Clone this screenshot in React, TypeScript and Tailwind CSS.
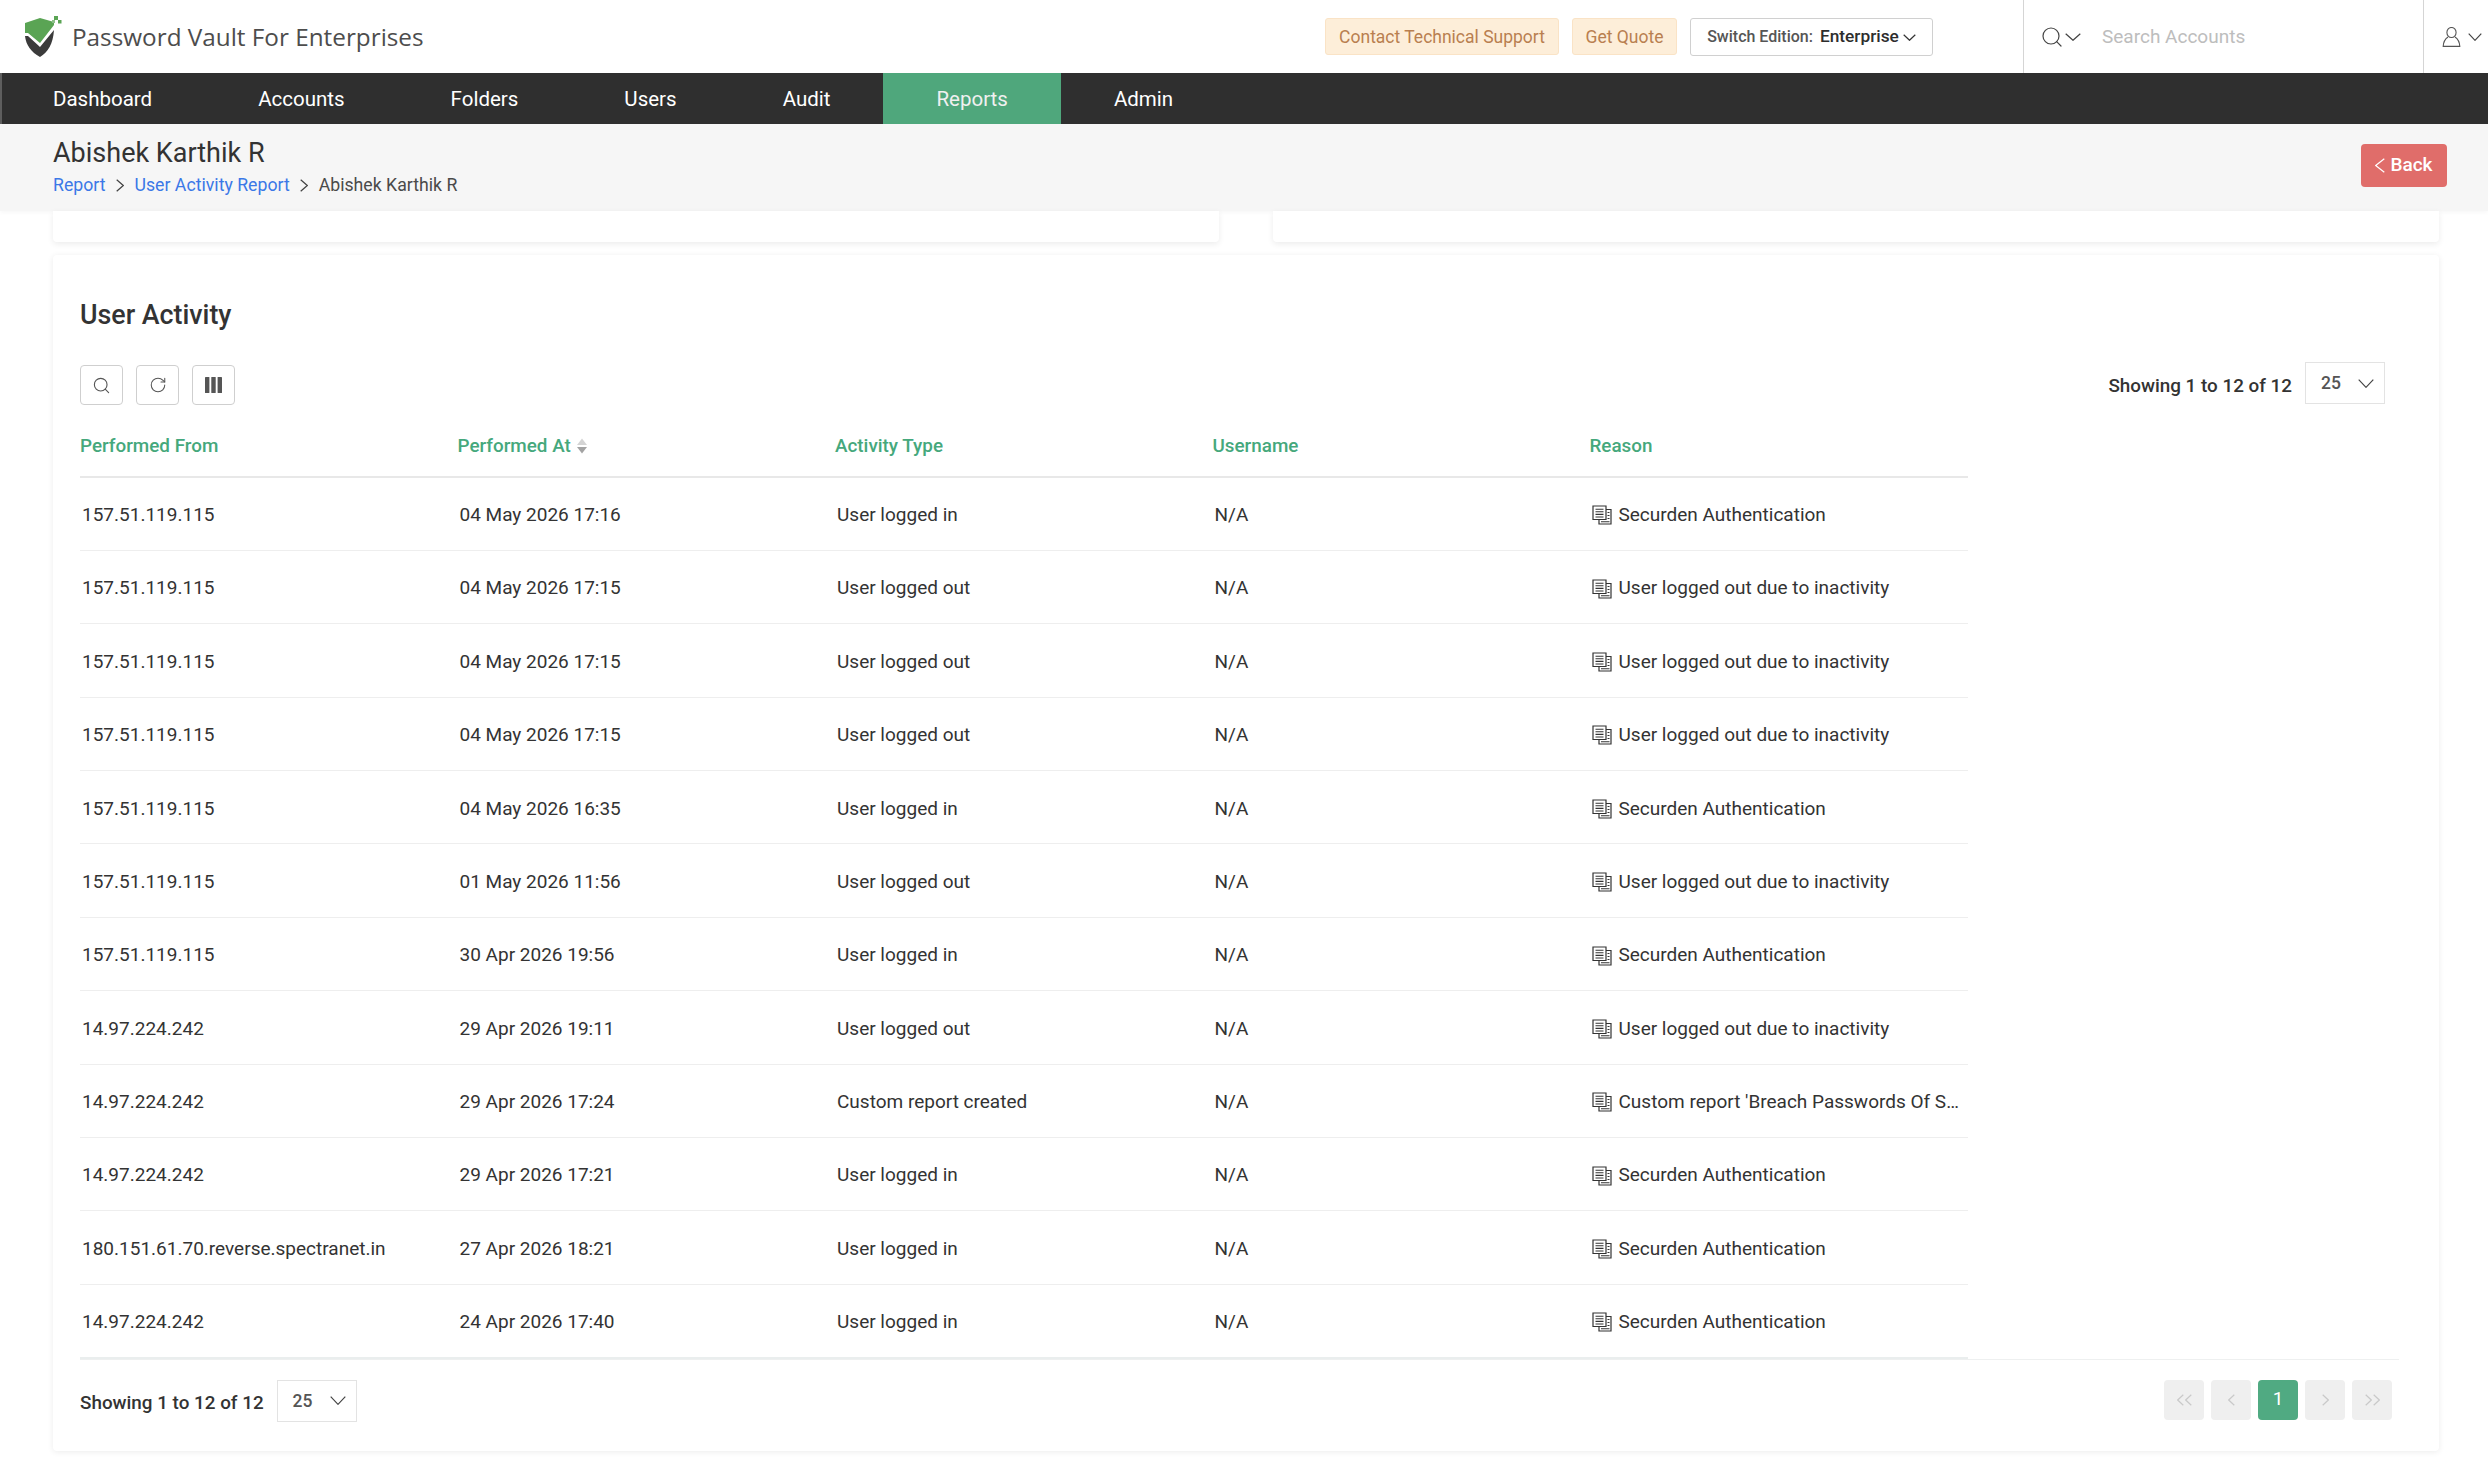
import { RotateCw, Search } from 'lucide-react';

interface ActivityRow {
  readonly from: string;
  readonly at: string;
  readonly type: string;
  readonly reason: string;
}

const NAV_ITEMS = ['Dashboard', 'Accounts', 'Folders', 'Users', 'Audit', 'Reports', 'Admin'];

const AUTH = 'Securden Authentication';
const INACTIVE = 'User logged out due to inactivity';
const LOCAL = '157.51.119.115';
const OTHER = '14.97.224.242';

const ROWS: ActivityRow[] = [
  { from: LOCAL, at: '04 May 2026 17:16', type: 'User logged in', reason: AUTH },
  { from: LOCAL, at: '04 May 2026 17:15', type: 'User logged out', reason: INACTIVE },
  { from: LOCAL, at: '04 May 2026 17:15', type: 'User logged out', reason: INACTIVE },
  { from: LOCAL, at: '04 May 2026 17:15', type: 'User logged out', reason: INACTIVE },
  { from: LOCAL, at: '04 May 2026 16:35', type: 'User logged in', reason: AUTH },
  { from: LOCAL, at: '01 May 2026 11:56', type: 'User logged out', reason: INACTIVE },
  { from: LOCAL, at: '30 Apr 2026 19:56', type: 'User logged in', reason: AUTH },
  { from: OTHER, at: '29 Apr 2026 19:11', type: 'User logged out', reason: INACTIVE },
  { from: OTHER, at: '29 Apr 2026 17:24', type: 'Custom report created', reason: "Custom report 'Breach Passwords Of S…" },
  { from: OTHER, at: '29 Apr 2026 17:21', type: 'User logged in', reason: AUTH },
  { from: '180.151.61.70.reverse.spectranet.in', at: '27 Apr 2026 18:21', type: 'User logged in', reason: AUTH },
  { from: OTHER, at: '24 Apr 2026 17:40', type: 'User logged in', reason: AUTH },
];

/** Thin open chevron; lucide's are too narrow for the wide flat ones in this UI. */
function Chevron({ w, h, dir = 'down', className }: { w: number; h: number; dir?: 'down' | 'left' | 'right'; className?: string }) {
  const points = {
    down: `0.7,0.7 ${w / 2},${h - 0.7} ${w - 0.7},0.7`,
    left: `${w - 0.7},0.7 0.7,${h / 2} ${w - 0.7},${h - 0.7}`,
    right: `0.7,0.7 ${w - 0.7},${h / 2} 0.7,${h - 0.7}`,
  }[dir];
  return (
    <svg width={w} height={h} viewBox={`0 0 ${w} ${h}`} fill="none" stroke="currentColor" strokeWidth="1.2" className={`shrink-0 ${className ?? ''}`}>
      <polyline points={points} />
    </svg>
  );
}

function Logo() {
  return (
    <svg width="42" height="42" viewBox="0 0 42 42" className="shrink-0">
      <path d="M1 7 L16 2 L30 6 L30 9 L16 27 L4 17 L1 17 Z" fill="#5aa454" />
      <path d="M1 20 L4 20 L16 31 L30 14 C29 28 24 36 16 41 C7 36 2 29 1 20 Z" fill="#3b3b3b" />
      <rect x="30" y="0" width="4" height="4" fill="#5aa454" />
      <rect x="34" y="4" width="3.5" height="3.5" fill="#5aa454" />
      <rect x="28" y="4" width="3" height="3" fill="#8cc088" />
    </svg>
  );
}

function DocIcon() {
  return (
    <svg width="20" height="20" viewBox="0 0 20 20" fill="none" stroke="#333" strokeWidth="1.2" className="shrink-0">
      <path d="M1 1h13v13.5H1z" />
      <path d="M14 4.5h5v14.5H7v-4.5" />
      <path d="M3.5 4.2h8M3.5 6.8h8M3.5 9.4h8M3.5 12h8M15.5 7.5h2M15.5 10.5h2M15.5 13.5h2M9 16.8h8.5" strokeWidth="1.1" />
    </svg>
  );
}

function SortIcon() {
  return (
    <svg width="12" height="16" viewBox="0 0 12 16" className="shrink-0">
      <path d="M6 0.5 L11 7 H1 Z" fill="#d4d4d4" />
      <path d="M6 15.5 L1 9 H11 Z" fill="#a3a3a3" />
    </svg>
  );
}

function UserIcon() {
  return (
    <svg width="19" height="20" viewBox="0 0 19 20" fill="none" stroke="#555" strokeWidth="1.1" className="shrink-0">
      <ellipse cx="9.5" cy="5.5" rx="4.6" ry="5" />
      <path d="M6 10 C3 12 1.5 14 1.2 19.4 H17.8 C17.5 14 16 12 13 10" />
    </svg>
  );
}

function PageSize() {
  return (
    <div className="flex h-[42px] w-[80px] items-center justify-between border-[1.5px] border-[#e3e3e3] bg-white pl-[15px] pr-[10px] text-[17.5px] text-[#555]">
      <span className="pt-[1px]">25</span>
      <Chevron w={16} h={9} className="text-[#444]" />
    </div>
  );
}

function PagerButton({ children, active }: { children: React.ReactNode; active?: boolean }) {
  return (
    <div
      className={`flex h-[40px] w-[40px] items-center justify-center rounded-[4px] text-[19px] ${
        active ? 'bg-[#50aa82] text-white' : 'bg-[#efefef] text-[#c9c9c9]'
      }`}
    >
      {children}
    </div>
  );
}

function ToolButton({ children }: { children: React.ReactNode }) {
  return (
    <div className="flex h-[40px] w-[43px] items-center justify-center rounded-[4px] border border-[#cfcfcf] text-[#555]">
      {children}
    </div>
  );
}

export default function App() {
  return (
    <div className="h-[1458px] w-[2488px] overflow-hidden bg-white font-['Roboto',sans-serif] text-[#333]">
      <header className="flex h-[73px] items-stretch bg-white">
        <div className="flex items-center pl-[24px] pt-[1px]">
          <Logo />
          <span className="ml-[6px] font-['Open_Sans',sans-serif] text-[24.3px] text-[#4d4d4d]">
            Password Vault For Enterprises
          </span>
        </div>
        <div className="ml-auto flex items-center gap-[13px] text-[17.5px]">
          <button className="flex h-[37px] w-[234px] items-center justify-center rounded-[3px] border border-[#fae3c6] bg-[#fdeed9] pt-[1px] text-[#b97f50]">
            Contact Technical Support
          </button>
          <button className="flex h-[37px] w-[105px] items-center justify-center rounded-[3px] border border-[#fae3c6] bg-[#fdeed9] pt-[1px] text-[#b97f50]">
            Get Quote
          </button>
          <button className="flex h-[38px] w-[243px] items-center justify-center rounded-[3px] border-[1.5px] border-[#d0d0d0] bg-white text-[16px] text-[#555]">
            <span className="font-medium">Switch Edition:</span>
            <span className="ml-[7px] text-[17.3px] font-medium text-[#2d2d2d]">Enterprise</span>
            <Chevron w={13} h={7} className="ml-[4px] mt-[1px] text-[#333]" />
          </button>
        </div>
        <div className="ml-[90px] flex w-[401px] items-center border-x border-[#d5d5d5] pl-[16px]">
          <Search size={24} strokeWidth={1.2} className="shrink-0 text-[#444]" />
          <Chevron w={16} h={8} className="ml-[1px] text-[#444]" />
          <input
            placeholder="Search Accounts"
            className="ml-[21px] mt-[1px] w-[300px] bg-transparent text-[19px] outline-none placeholder:text-[#bdbdbd]"
          />
        </div>
        <div className="flex w-[64px] items-center pl-[18px]">
          <UserIcon />
          <Chevron w={14} h={8} className="ml-[7px] text-[#444]" />
        </div>
      </header>

      <nav className="flex h-[51px] border-l-2 border-[#5e5e5e] bg-[#2f2f2f] pl-0 text-[20.5px] text-white">
        {NAV_ITEMS.map((item) => (
          <a
            key={item}
            className={`flex items-center pt-[1px] ${item === 'Dashboard' ? 'pl-[51px] pr-[53px]' : 'px-[53px]'} ${
              item === 'Reports' ? 'bg-[#4fa77c] text-[#f0f0f0]' : ''
            }`}
          >
            {item}
          </a>
        ))}
      </nav>

      <div className="flex h-[87px] items-start justify-between bg-[#f6f6f6] pl-[53px] pr-[41px] shadow-[0_2px_4px_rgba(0,0,0,0.03)]">
        <div className="pt-[13px]">
          <h1 className="text-[27px] leading-[32px] text-[#333]">Abishek Karthik R</h1>
          <div className="mt-[6px] flex items-center text-[17.7px] leading-[20px]">
            <a className="text-[#3b78e7]">Report</a>
            <Chevron w={8} h={13} dir="right" className="mx-[10.5px] text-[#444]" />
            <a className="text-[#3b78e7]">User Activity Report</a>
            <Chevron w={8} h={13} dir="right" className="mx-[10.5px] text-[#444]" />
            <span className="text-[#4a4a4a]">Abishek Karthik R</span>
          </div>
        </div>
        <button className="mt-[20px] flex h-[43px] w-[86px] items-center justify-center gap-[5px] rounded-[4px] bg-[#e06d6a] text-[19px] font-medium text-white">
          <Chevron w={10} h={15} dir="left" />
          <span>Back</span>
        </button>
      </div>

      <div className="flex pl-[53px] pr-[49px]">
        <div className="h-[31px] w-[1166px] rounded-b-[4px] bg-white shadow-[0_2px_6px_rgba(0,0,0,0.08)]" />
        <div className="ml-[54px] h-[31px] w-[1166px] rounded-b-[4px] bg-white shadow-[0_2px_6px_rgba(0,0,0,0.08)]" />
      </div>

      <section className="ml-[53px] mt-[13px] h-[1196px] w-[2386px] rounded-[4px] bg-white pl-[27px] pr-[40px] pt-[42px] shadow-[0_1px_6px_rgba(0,0,0,0.08)]">
        <h2 className="text-[26.8px] font-medium leading-[36px] text-[#333]">User Activity</h2>

        <div className="mt-[29px] flex items-start justify-between pr-[14px]">
          <div className="mt-[3px] flex gap-[13px]">
            <ToolButton>
              <Search size={19} strokeWidth={1.4} />
            </ToolButton>
            <ToolButton>
              <RotateCw size={18} strokeWidth={1.4} />
            </ToolButton>
            <ToolButton>
              <svg width="17" height="16" viewBox="0 0 17 16" fill="#555">
                <rect x="0" width="4.4" height="16" rx="0.6" />
                <rect x="6.3" width="4.4" height="16" rx="0.6" />
                <rect x="12.6" width="4.4" height="16" rx="0.6" />
              </svg>
            </ToolButton>
          </div>
          <div className="flex items-start gap-[13px] text-[18.85px] font-medium">
            <span className="pt-[10px]">Showing 1 to 12 of 12</span>
            <PageSize />
          </div>
        </div>

        <table className="mt-[8px] w-[1888px] table-fixed border-collapse text-left">
          <colgroup>
            <col className="w-[377.5px]" />
            <col className="w-[377.5px]" />
            <col className="w-[377.5px]" />
            <col className="w-[377px]" />
            <col />
          </colgroup>
          <thead>
            <tr className="h-[64px] border-b-2 border-[#e8e8e8] text-[18.85px] text-[#45a87c]">
              <th className="pt-[3px] font-medium">Performed From</th>
              <th className="pt-[3px] font-medium">
                <span className="flex items-center gap-[5px]">
                  Performed At
                  <SortIcon />
                </span>
              </th>
              <th className="pt-[3px] font-medium">Activity Type</th>
              <th className="pt-[3px] font-medium">Username</th>
              <th className="pt-[3px] font-medium">Reason</th>
            </tr>
          </thead>
          <tbody className="text-[19px] text-[#333]">
            {ROWS.map((row, index) => (
              <tr
                key={`${row.at}-${index}`}
                className={`h-[73.4px] ${index < ROWS.length - 1 ? 'border-b border-[#eeeeee]' : 'border-b-2 border-[#eaeeee]'}`}
              >
                <td className="pl-[2px] pt-[3px]">{row.from}</td>
                <td className="pl-[2px] pt-[3px]">{row.at}</td>
                <td className="pl-[2px] pt-[3px]">{row.type}</td>
                <td className="pl-[2px] pt-[3px]">N/A</td>
                <td className="pl-[2px] pt-[3px]">
                  <span className="flex items-center gap-[7px]">
                    <DocIcon />
                    {row.reason}
                  </span>
                </td>
              </tr>
            ))}
          </tbody>
        </table>

        <div className="border-t border-[#eef0f0]" />

        <div className="mt-[20px] flex items-start justify-between pr-[7px]">
          <div className="flex items-start gap-[13px] text-[18.85px] font-medium">
            <span className="pt-[9px]">Showing 1 to 12 of 12</span>
            <PageSize />
          </div>
          <div className="flex gap-[7px]">
            <PagerButton>
              <span className="flex">
                <Chevron w={7} h={12} dir="left" />
                <Chevron w={7} h={12} dir="left" className="ml-[1px]" />
              </span>
            </PagerButton>
            <PagerButton>
              <Chevron w={7} h={12} dir="left" />
            </PagerButton>
            <PagerButton active>1</PagerButton>
            <PagerButton>
              <Chevron w={7} h={12} dir="right" />
            </PagerButton>
            <PagerButton>
              <span className="flex">
                <Chevron w={7} h={12} dir="right" />
                <Chevron w={7} h={12} dir="right" className="ml-[1px]" />
              </span>
            </PagerButton>
          </div>
        </div>
      </section>
    </div>
  );
}
